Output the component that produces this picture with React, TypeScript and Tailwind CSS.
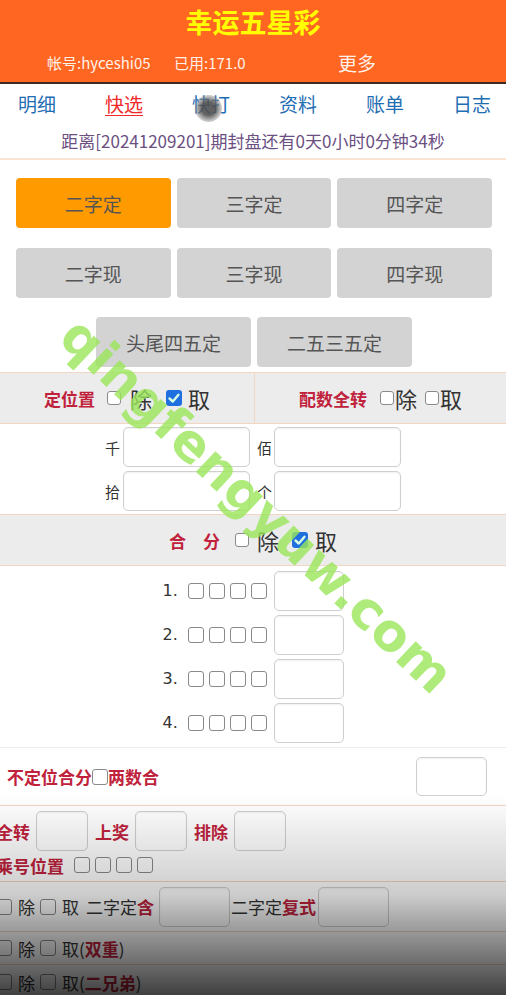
const RED = "text-[#c0223c] font-bold";
const LINE = "border-[#f3d6c2]";

type BoxProps = { size?: "sm" | "md"; checked?: boolean; className?: string };

function Box({ size = "md", checked = false, className = "" }: BoxProps) {
	const dim = size === "sm" ? "w-[14px] h-[14px]" : "w-[16px] h-[16px]";
	if (checked) {
		return (
			<span className={`${dim} ${className} inline-flex shrink-0 items-center justify-center rounded-[3px] bg-[#1f6fe0]`}>
				<svg viewBox="0 0 16 16" className="w-full h-full">
					<polyline points="3.5,8.5 6.8,11.5 12.5,4.8" fill="none" stroke="#d9ffe4" strokeWidth="2.4" strokeLinecap="round" strokeLinejoin="round" />
				</svg>
			</span>
		);
	}
	return <span className={`${dim} ${className} inline-block shrink-0 rounded-[3px] border border-[#8a8a8a] bg-white`} />;
}

function Field({ className = "" }: { className?: string }) {
	return <span className={`${className} inline-block shrink-0 rounded-[5px] border border-[#cfcfcf] bg-white shadow-[inset_0_1px_2px_rgba(0,0,0,0.06)]`} />;
}

const NAV = ["明细", "快选", "快打", "资料", "账单", "日志"];
const TYPES = ["二字定", "三字定", "四字定", "二字现", "三字现", "四字现"];

export default function App() {
	return (
		<div className="relative h-[995px] overflow-hidden bg-white font-[Noto_Sans_CJK_SC,sans-serif] leading-none">
			{/* header */}
			<header className="h-[84px] bg-[#ff6622] border-b-2 border-[#3b2b22]">
				<div className="h-[42px] flex items-center justify-center text-[27px] font-bold text-[#ffff00]">幸运五星彩</div>
				<div className="h-[40px] flex items-center pl-[47px] text-[15px] text-[#fff1e8]">
					<span className="w-[127px]">帐号:hyceshi05</span>
					<span className="w-[164px]">已用:171.0</span>
					<span className="text-[19px]">更多</span>
				</div>
			</header>

			<nav className="h-[38px] flex items-center justify-between pl-[18px] pr-[15px] text-[19px] text-[#1f6db3]">
				{NAV.map((n) => (
					<span key={n} className={n === "快选" ? "text-[#f02828] underline underline-offset-[3px]" : ""}>
						{n}
					</span>
				))}
			</nav>
			<div className="h-[38px] flex items-center justify-center border-b-2 border-[#fbe3d2] text-[17px] text-[#6b4f82]">
				距离[20241209201]期封盘还有0天0小时0分钟34秒
			</div>

			{/* play types */}
			<div className="pl-[16px] pr-[14px] pt-[18px] pb-[5px]">
				<div className="grid grid-cols-3 gap-x-[6px] gap-y-[20px]">
					{TYPES.map((t, i) => (
						<div
							key={t}
							className={`h-[50px] flex items-center justify-center rounded-[4px] text-[19px] text-[#555] ${i === 0 ? "bg-[#ff9a00]" : "bg-[#d3d3d3]"}`}
						>
							{t}
						</div>
					))}
				</div>
				<div className="mt-[19px] flex justify-center gap-[6px]">
					<div className="w-[155px] h-[50px] flex items-center justify-center rounded-[4px] bg-[#d3d3d3] text-[19px] text-[#555]">头尾四五定</div>
					<div className="w-[155px] h-[50px] flex items-center justify-center rounded-[4px] bg-[#d3d3d3] text-[19px] text-[#555]">二五三五定</div>
				</div>
			</div>

			{/* position */}
			<div className={`h-[52px] grid grid-cols-[255px_1fr] border-y ${LINE} bg-[#ececec]`}>
				<div className={`flex items-center justify-center border-r ${LINE}`}>
					<span className={`${RED} text-[17px]`}>定位置</span>
					<Box size="sm" className="ml-[12px]" />
					<span className="ml-[9px] text-[22px] text-[#333]">除</span>
					<Box checked className="ml-[14px]" />
					<span className="ml-[6px] text-[22px] text-[#333]">取</span>
				</div>
				<div className="flex items-center justify-center">
					<span className={`${RED} text-[17px]`}>配数全转</span>
					<Box size="sm" className="ml-[13px]" />
					<span className="ml-[1px] text-[22px] text-[#333]">除</span>
					<Box size="sm" className="ml-[8px]" />
					<span className="ml-[1px] text-[22px] text-[#333]">取</span>
				</div>
			</div>

			<div className="py-[3px] flex flex-col gap-[4px] text-[15px] text-[#333]">
				{[
					["千", "佰"],
					["拾", "个"],
				].map(([a, b]) => (
					<div key={a} className="h-[40px] flex items-center justify-center">
						<span className="w-[14px]">{a}</span>
						<Field className="ml-[4px] w-[127px] h-[40px]" />
						<span className="ml-[7px] w-[14px]">{b}</span>
						<Field className="ml-[3px] w-[127px] h-[40px]" />
					</div>
				))}
			</div>

			<div className={`h-[52px] flex items-center justify-center border-y ${LINE} bg-[#ececec]`}>
				<span className={`${RED} text-[17px]`}>合</span>
				<span className={`${RED} text-[17px] ml-[17px]`}>分</span>
				<Box size="sm" className="ml-[15px]" />
				<span className="ml-[8px] text-[22px] text-[#333]">除</span>
				<Box checked className="ml-[13px]" />
				<span className="ml-[7px] text-[22px] text-[#333]">取</span>
			</div>

			<div className="pt-[5px] pb-[4px] flex flex-col gap-[4px] border-b border-[#ececec]">
				{[1, 2, 3, 4].map((n) => (
					<div key={n} className="h-[40px] flex items-center justify-center">
						<span className="w-[15px] text-[16px] text-[#333] font-[DejaVu_Sans,sans-serif]">{n}.</span>
						<div className="ml-[10px] flex gap-[5px]">
							<Box />
							<Box />
							<Box />
							<Box />
						</div>
						<Field className="ml-[7px] w-[70px] h-[40px]" />
					</div>
				))}
			</div>

			<div className={`h-[58px] flex items-center justify-between pl-[7px] pr-[19px] border-b ${LINE}`}>
				<div className="flex items-center text-[17px]">
					<span className={RED}>不定位合分</span>
					<Box />
					<span className={RED}>两数合</span>
				</div>
				<Field className="w-[71px] h-[39px]" />
			</div>

			<div className={`pt-[5px] pb-[2px] border-b ${LINE} -ml-[4px]`}>
				<div className="h-[40px] flex items-center text-[17px]">
					<span className={RED}>全转</span>
					<Field className="ml-[6px] w-[52px] h-[40px]" />
					<span className={`${RED} ml-[7px]`}>上奖</span>
					<Field className="ml-[6px] w-[52px] h-[40px]" />
					<span className={`${RED} ml-[7px]`}>排除</span>
					<Field className="ml-[6px] w-[52px] h-[40px]" />
				</div>
				<div className="h-[28px] flex items-center text-[17px]">
					<span className={RED}>乘号位置</span>
					<div className="ml-[10px] flex gap-[5px]">
						<Box />
						<Box />
						<Box />
						<Box />
					</div>
				</div>
			</div>

			<div className={`h-[50px] flex items-center -ml-[4px] border-b ${LINE} text-[17px] text-[#333]`}>
				<Box />
				<span className="ml-[6px]">除</span>
				<Box className="ml-[5px]" />
				<span className="ml-[6px]">取</span>
				<span className="ml-[7px]">二字定</span>
				<span className={RED}>含</span>
				<Field className="ml-[5px] w-[71px] h-[40px]" />
				<span className="ml-[1px]">二字定</span>
				<span className={RED}>复式</span>
				<Field className="ml-[2px] w-[71px] h-[40px]" />
			</div>

			<div className={`h-[33px] flex items-center -ml-[4px] border-b ${LINE} text-[17px] text-[#333]`}>
				<Box />
				<span className="ml-[6px]">除</span>
				<Box className="ml-[5px]" />
				<span className="ml-[6px]">取(</span>
				<span className={RED}>双重</span>
				<span>)</span>
			</div>

			<div className="h-[34px] flex items-center -ml-[4px] text-[17px] text-[#333]">
				<Box />
				<span className="ml-[6px]">除</span>
				<Box className="ml-[5px]" />
				<span className="ml-[6px]">取(</span>
				<span className={RED}>二兄弟</span>
				<span>)</span>
			</div>

			{/* touch indicator */}
			<span className="pointer-events-none absolute left-[195px] top-[95px] w-[27px] h-[27px] rounded-full bg-[radial-gradient(circle,rgba(80,80,80,0.9)_35%,rgba(140,140,140,0.5)_65%,transparent_100%)]" />

			{/* watermark */}
			<span className="pointer-events-none absolute left-[257px] top-[505px] -translate-x-1/2 -translate-y-1/2 rotate-[43.5deg] whitespace-nowrap font-[DejaVu_Sans,sans-serif] text-[52px] font-bold text-[#9ae65a]/80">
				qingfengyuw.com
			</span>

			{/* video shade */}
			<div className="pointer-events-none absolute bottom-0 left-0 right-0 h-[200px] bg-linear-to-b from-transparent via-black/20 to-black/75" />
		</div>
	);
}
